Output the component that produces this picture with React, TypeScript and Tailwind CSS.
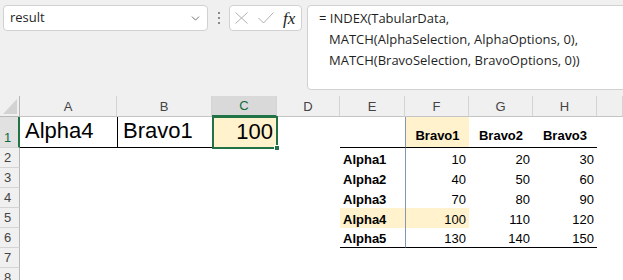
import { ChevronDown } from "lucide-react";

const tableRows: [string, number, number, number][] = [
  ["Alpha1", 10, 20, 30],
  ["Alpha2", 40, 50, 60],
  ["Alpha3", 70, 80, 90],
  ["Alpha4", 100, 110, 120],
  ["Alpha5", 130, 140, 150],
];

const colLetters = ["A", "B", "C", "D", "E", "F", "G", "H", ""];

function RowHead({ n, active }: { n: number; active?: boolean }) {
  return (
    <div
      className={
        "flex items-end pl-[4px] pb-[3px] text-[13px] leading-none border-b border-[#d4d4d4] " +
        (active
          ? "bg-[#e1e1e1] text-[#0f6b3a] border-r-2 border-r-[#217346]"
          : "bg-[#f0f0f0] text-[#444] border-r border-r-[#b8b8b8]")
      }
    >
      {n}
    </div>
  );
}

function TopBar() {
  return (
    <div className="flex items-start h-[96px] bg-[#f0f0f0] pt-[5px] pl-[3px] font-['Open_Sans',sans-serif]">
      {/* name box */}
      <div className="flex items-center justify-between w-[205px] h-[26px] bg-white border border-[#d1d1d1] rounded-[4px] pl-[6px] pr-[5px]">
        <span className="text-[13px] text-[#1f1f1f]">result</span>
        <ChevronDown size={13} strokeWidth={1.5} className="text-[#555]" />
      </div>
      {/* splitter dots */}
      <div className="flex flex-col items-center justify-center gap-[3px] w-[21px] h-[26px] pl-[1px]">
        <span className="w-[2px] h-[2px] bg-[#8a8a8a]" />
        <span className="w-[2px] h-[2px] bg-[#8a8a8a]" />
        <span className="w-[2px] h-[2px] bg-[#8a8a8a]" />
      </div>
      {/* cancel / enter / fx */}
      <div className="flex items-center w-[73px] h-[26px] bg-white border border-[#d1d1d1] rounded-[4px] pl-[5px]">
        <svg width="13" height="12" viewBox="0 0 13 12" fill="none" stroke="#b0b0b0" strokeWidth="1">
          <path d="M0.5 0.5 L12.5 11.5 M12.5 0.5 L0.5 11.5" />
        </svg>
        <svg className="ml-[10px]" width="16" height="12" viewBox="0 0 16 12" fill="none" stroke="#b0b0b0" strokeWidth="1">
          <path d="M0.5 6 L5.5 11 L15.5 0.5" />
        </svg>
        <span className="ml-[9px] font-['Liberation_Serif',serif] italic text-[17px] leading-none text-[#222]">fx</span>
      </div>
      {/* formula box */}
      <div className="ml-[5px] flex-1 -mr-[8px] h-[85px] bg-white border border-[#d1d1d1] rounded-[4px] pl-[11px] pt-[2px] text-[13px] leading-[21px] text-[#1f1f1f]">
        <div>= INDEX(TabularData,</div>
        <div className="pl-[10px]">MATCH(AlphaSelection, AlphaOptions, 0),</div>
        <div className="pl-[10px]">MATCH(BravoSelection, BravoOptions, 0))</div>
      </div>
    </div>
  );
}

export default function App() {
  return (
    <div className="w-[623px] h-[280px] overflow-hidden bg-white font-['Liberation_Sans',sans-serif]">
      <TopBar />
      <div className="grid grid-cols-[20px_97px_95px_65px_63px_65px_64px_64px_64px_1fr] grid-rows-[21px_31px_repeat(7,20px)] text-black">
        {/* corner */}
        <div className="relative bg-[#f0f0f0] border-r border-b border-[#b8b8b8]">
          <svg className="absolute right-[2px] bottom-[2px]" width="14" height="15" viewBox="0 0 14 15">
            <polygon points="14,0 14,15 0,15" fill="#d3d3d3" />
          </svg>
        </div>
        {/* column headers */}
        {colLetters.map((c, i) => (
          <div
            key={i}
            className={
              "flex items-end justify-center pb-[3px] text-[13px] leading-none border-r border-[#d4d4d4] " +
              (c === "C"
                ? "bg-[#d9d9d9] text-[#0f6b3a] border-b-2 border-b-[#217346]"
                : "bg-[#f0f0f0] text-[#444] border-b border-b-[#c4c4c4]")
            }
          >
            {c}
          </div>
        ))}

        {/* row 1 */}
        <RowHead n={1} active />
        <div className="flex items-end pl-[5px] pb-[5px] text-[22px] leading-none border-b border-black">
          Alpha4
        </div>
        <div className="flex items-end pl-[5px] pb-[5px] text-[22px] leading-none border-l border-b border-black">
          Bravo1
        </div>
        <div className="relative flex items-end justify-end pr-[4px] pb-[5px] text-[22px] leading-none bg-[#fff2cc]">
          100
          <div className="absolute -top-[1px] left-0 w-[66px] h-[33px] border-2 border-[#217346]" />
          <div className="absolute -right-[3px] -bottom-[3px] w-[6px] h-[6px] bg-[#217346] border border-white" />
        </div>
        <div />
        <div className="border-b border-black" />
        <div className="flex items-end justify-center pb-[5px] text-[13px] leading-none font-bold bg-[#fff2cc] border-l border-l-[#8497b0] border-b border-b-black">
          Bravo1
        </div>
        <div className="flex items-end justify-center pb-[5px] text-[13px] leading-none font-bold border-b border-black">
          Bravo2
        </div>
        <div className="flex items-end justify-center pb-[5px] text-[13px] leading-none font-bold border-b border-black">
          Bravo3
        </div>
        <div />

        {/* rows 2-6: lookup table */}
        {tableRows.map(([label, f, g, h], r) => {
          const hit = label === "Alpha4";
          const last = r === tableRows.length - 1 ? " border-b border-b-black" : "";
          const num = "flex items-end justify-end pr-[3px] pb-[2px] text-[13px] leading-none";
          return [
            <RowHead key={`rh${r}`} n={r + 2} />,
            <div key={`a${r}`} />,
            <div key={`b${r}`} />,
            <div key={`c${r}`} />,
            <div key={`d${r}`} />,
            <div
              key={`e${r}`}
              className={"flex items-end pl-[3px] pb-[2px] text-[13px] leading-none font-bold" + (hit ? " bg-[#fff2cc]" : "") + last}
            >
              {label}
            </div>,
            <div key={`f${r}`} className={num + " border-l border-l-[#8497b0]" + (hit ? " bg-[#fff2cc]" : "") + last}>
              {f}
            </div>,
            <div key={`g${r}`} className={num + last}>
              {g}
            </div>,
            <div key={`h${r}`} className={num + last}>
              {h}
            </div>,
            <div key={`i${r}`} />,
          ];
        })}

        {/* rows 7-8: empty */}
        {[7, 8].map((n) => [
          <RowHead key={`rh${n}`} n={n} />,
          <div key={`e${n}`} className="col-span-9" />,
        ])}
      </div>
    </div>
  );
}
